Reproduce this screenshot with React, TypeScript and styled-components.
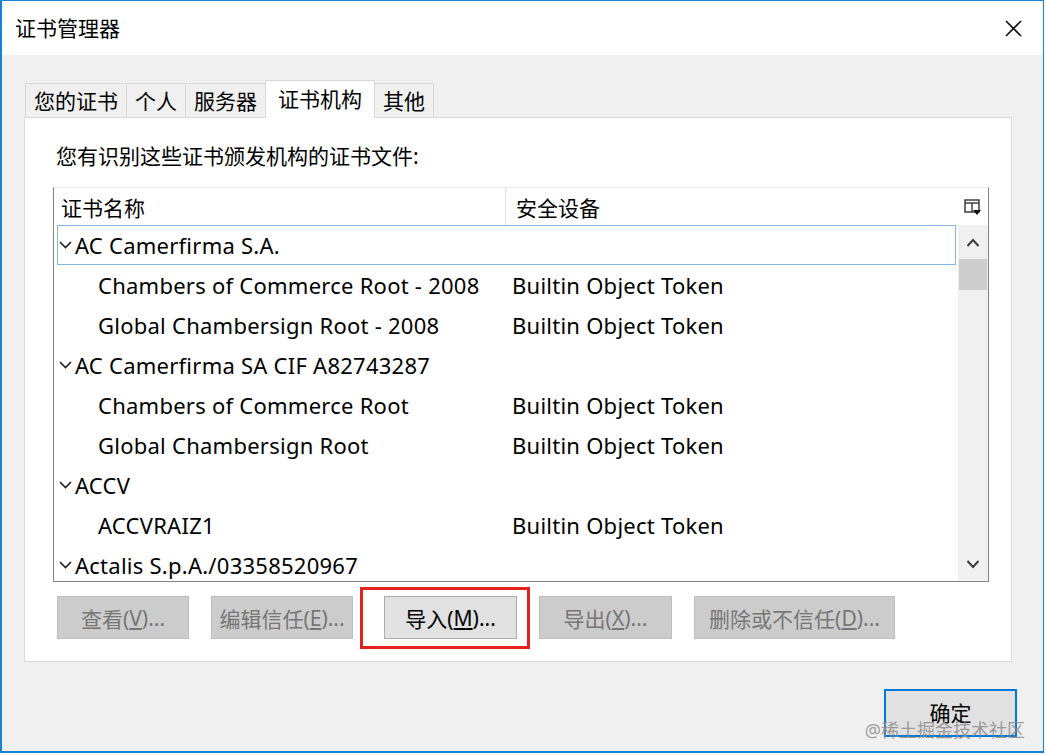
import React from 'react';
import styled, { createGlobalStyle, css } from 'styled-components';

const GlobalStyle = createGlobalStyle`
  html, body {
    margin: 0;
    padding: 0;
    background: #ffffff;
  }
  body {
    font-family: "Noto Sans", "Noto Sans CJK SC", sans-serif;
    color: #000;
  }
  * {
    box-sizing: border-box;
  }
`;

const Window = styled.div`
  width: 1044px;
  height: 753px;
  display: flex;
  flex-direction: column;
  border: 1px solid #1a82d6;
  border-left-width: 2px;
  border-bottom-width: 2px;
  background: #f0f0f0;
`;

const TitleBar = styled.div`
  height: 54px;
  flex: none;
  display: flex;
  align-items: center;
  justify-content: space-between;
  padding: 0 18px 0 13px;
  background: #ffffff;
`;

const Title = styled.span`
  font-size: 21px;
  line-height: 28px;
`;

const CloseButton = styled.button`
  width: 24px;
  height: 24px;
  padding: 0;
  border: none;
  background: transparent;
  display: flex;
  align-items: center;
  justify-content: center;
`;

const Body = styled.div`
  position: relative;
  flex: 1;
  padding: 24px 0 0 22px;
  background: #f0f0f0;
`;

const TabStrip = styled.div`
  display: flex;
  align-items: flex-end;
  height: 38px;
  padding-left: 1px;
`;

const Tab = styled.div<{ $active?: boolean }>`
  height: 34px;
  padding: 0 8px 2px;
  display: flex;
  align-items: center;
  font-size: 21px;
  border: 1px solid #d9d9d9;
  border-bottom: none;
  margin-right: -1px;
  background: #f0f0f0;
  color: #000;
  ${(p) =>
    p.$active &&
    css`
      position: relative;
      z-index: 1;
      height: 38px;
      padding: 0 12px 4px;
      margin-bottom: -1px;
      background: #ffffff;
    `}
`;

const Panel = styled.div`
  width: 988px;
  height: 545px;
  display: flex;
  flex-direction: column;
  padding: 23px 22px 0 28px;
  background: #ffffff;
  border: 1px solid #d9d9d9;
`;

const Intro = styled.div`
  font-size: 21px;
  line-height: 30px;
  margin-left: 3px;
`;

const Tree = styled.div`
  margin-top: 16px;
  width: 936px;
  height: 395px;
  display: flex;
  flex-direction: column;
  border: 1px solid #828282;
  border-top-color: #e8e8e8;
  background: #ffffff;
  overflow: hidden;
`;

const HeaderRow = styled.div`
  height: 37px;
  flex: none;
  display: flex;
  align-items: stretch;
  font-size: 21px;
`;

const HeaderCell = styled.div<{ $width?: number; $divider?: boolean }>`
  display: flex;
  align-items: center;
  padding-left: ${(p) => (p.$divider ? 10 : 7)}px;
  ${(p) => (p.$width ? `width: ${p.$width}px; flex: none;` : 'flex: 1;')}
  ${(p) => p.$divider && 'border-left: 1px solid #e3e3e3;'}
`;

const PickerCell = styled.div`
  width: 30px;
  flex: none;
  display: flex;
  align-items: center;
  justify-content: center;
`;

const TreeBody = styled.div`
  flex: 1;
  display: flex;
  min-height: 0;
`;

const RowList = styled.div`
  flex: 1;
  overflow: hidden;
  padding: 0 2px 0 3px;
`;

const Row = styled.div<{ $selected?: boolean }>`
  height: 40px;
  display: flex;
  align-items: center;
  border: 1px solid ${(p) => (p.$selected ? '#84b9e6' : 'transparent')};
  font-size: 22px;
  letter-spacing: 0.25px;
  white-space: nowrap;
`;

const NameCell = styled.div<{ $child?: boolean }>`
  width: 454px;
  flex: none;
  display: flex;
  align-items: center;
  gap: 3px;
  padding-left: ${(p) => (p.$child ? 40 : 1)}px;
  overflow: hidden;
`;

const DeviceCell = styled.div`
  flex: 1;
`;

const Scrollbar = styled.div`
  width: 30px;
  flex: none;
  display: flex;
  flex-direction: column;
  background: #f0f0f0;
`;

const ScrollArrow = styled.div`
  height: 34px;
  flex: none;
  display: flex;
  align-items: center;
  justify-content: center;
`;

const ScrollThumb = styled.div`
  height: 31px;
  flex: none;
  margin: 0 1px;
  background: #cdcdcd;
`;

const ScrollTrack = styled.div`
  flex: 1;
`;

const ButtonRow = styled.div`
  display: flex;
  gap: 22px;
  margin-top: 14px;
  margin-left: 4px;
`;

const DialogButton = styled.button<{ $width: number; $disabled?: boolean }>`
  width: ${(p) => p.$width}px;
  height: 43px;
  padding: 0;
  font-family: inherit;
  font-size: 21px;
  border: 1px solid ${(p) => (p.$disabled ? '#bfbfbf' : '#adadad')};
  background: ${(p) => (p.$disabled ? '#cccccc' : '#e1e1e1')};
  color: ${(p) => (p.$disabled ? '#767676' : '#000000')};
  display: flex;
  align-items: center;
  justify-content: center;
`;

const Highlight = styled.div`
  position: relative;
  margin-left: 9px;

  &::after {
    content: '';
    position: absolute;
    left: -24px;
    right: -13px;
    top: -9px;
    bottom: -10px;
    border: 3px solid #e3221f;
    pointer-events: none;
  }
`;

const Footer = styled.div`
  display: flex;
  justify-content: flex-end;
  margin-top: 27px;
  padding-right: 26px;
`;

const OkButton = styled.button`
  width: 133px;
  height: 48px;
  padding: 0 0 2px;
  font-family: inherit;
  font-size: 21px;
  background: #e1e1e1;
  border: 2px solid #0078d7;
  color: #000;
`;

const Watermark = styled.div`
  position: absolute;
  right: 18px;
  bottom: 8px;
  font-size: 18px;
  line-height: 26px;
  color: rgba(140, 140, 140, 0.85);
  pointer-events: none;
`;

const Chevron = () => (
  <svg width="13" height="8" viewBox="0 0 13 8">
    <polyline points="1,1 6.5,6.5 12,1" fill="none" stroke="#222" strokeWidth="1.6" />
  </svg>
);

const ArrowIcon = ({ up }: { up?: boolean }) => (
  <svg width="14" height="9" viewBox="0 0 14 9">
    <polyline
      points={up ? '1.5,8 7,2 12.5,8' : '1.5,1 7,7 12.5,1'}
      fill="none"
      stroke="#3c3c3c"
      strokeWidth="2"
    />
  </svg>
);

const ColumnPickerIcon = () => (
  <svg width="18" height="18" viewBox="0 0 18 18">
    <rect x="1" y="2" width="14" height="12" fill="#fff" stroke="#333" strokeWidth="1.4" />
    <line x1="1" y1="5" x2="15" y2="5" stroke="#333" strokeWidth="1.4" />
    <line x1="8" y1="5" x2="8" y2="14" stroke="#333" strokeWidth="1.4" />
    <polygon points="9,12 17,12 13,17" fill="#111" />
  </svg>
);

type Cert = { name: string; device?: string; child?: boolean; selected?: boolean };

const certs: Cert[] = [
  { name: 'AC Camerfirma S.A.', selected: true },
  { name: 'Chambers of Commerce Root - 2008', device: 'Builtin Object Token', child: true },
  { name: 'Global Chambersign Root - 2008', device: 'Builtin Object Token', child: true },
  { name: 'AC Camerfirma SA CIF A82743287' },
  { name: 'Chambers of Commerce Root', device: 'Builtin Object Token', child: true },
  { name: 'Global Chambersign Root', device: 'Builtin Object Token', child: true },
  { name: 'ACCV' },
  { name: 'ACCVRAIZ1', device: 'Builtin Object Token', child: true },
  { name: 'Actalis S.p.A./03358520967' },
];

const tabs = ['您的证书', '个人', '服务器', '证书机构', '其他'];

const App: React.FC = () => {
  return (
    <>
      <GlobalStyle />
      <Window>
        <TitleBar>
          <Title>证书管理器</Title>
          <CloseButton aria-label="关闭">
            <svg width="17" height="17" viewBox="0 0 17 17">
              <path d="M1 1 L16 16 M16 1 L1 16" stroke="#111" strokeWidth="1.6" />
            </svg>
          </CloseButton>
        </TitleBar>

        <Body>
          <TabStrip>
            {tabs.map((t) => (
              <Tab key={t} $active={t === '证书机构'}>
                {t}
              </Tab>
            ))}
          </TabStrip>

          <Panel>
            <Intro>您有识别这些证书颁发机构的证书文件:</Intro>

            <Tree>
              <HeaderRow>
                <HeaderCell $width={451}>证书名称</HeaderCell>
                <HeaderCell $divider>安全设备</HeaderCell>
                <PickerCell>
                  <ColumnPickerIcon />
                </PickerCell>
              </HeaderRow>

              <TreeBody>
                <RowList>
                  {certs.map((c) => (
                    <Row key={c.name} $selected={c.selected}>
                      <NameCell $child={c.child}>
                        {!c.child && <Chevron />}
                        <span>{c.name}</span>
                      </NameCell>
                      <DeviceCell>{c.device}</DeviceCell>
                    </Row>
                  ))}
                </RowList>
                <Scrollbar>
                  <ScrollArrow>
                    <ArrowIcon up />
                  </ScrollArrow>
                  <ScrollThumb />
                  <ScrollTrack />
                  <ScrollArrow>
                    <ArrowIcon />
                  </ScrollArrow>
                </Scrollbar>
              </TreeBody>
            </Tree>

            <ButtonRow>
              <DialogButton $width={132} $disabled>
                查看(<u>V</u>)...
              </DialogButton>
              <DialogButton $width={142} $disabled>
                编辑信任(<u>E</u>)...
              </DialogButton>
              <Highlight>
                <DialogButton $width={133}>
                  导入(<u>M</u>)...
                </DialogButton>
              </Highlight>
              <DialogButton $width={133} $disabled>
                导出(<u>X</u>)...
              </DialogButton>
              <DialogButton $width={201} $disabled>
                删除或不信任(<u>D</u>)...
              </DialogButton>
            </ButtonRow>
          </Panel>

          <Footer>
            <OkButton>确定</OkButton>
          </Footer>

          <Watermark>@稀土掘金技术社区</Watermark>
        </Body>
      </Window>
    </>
  );
};

export default App;
